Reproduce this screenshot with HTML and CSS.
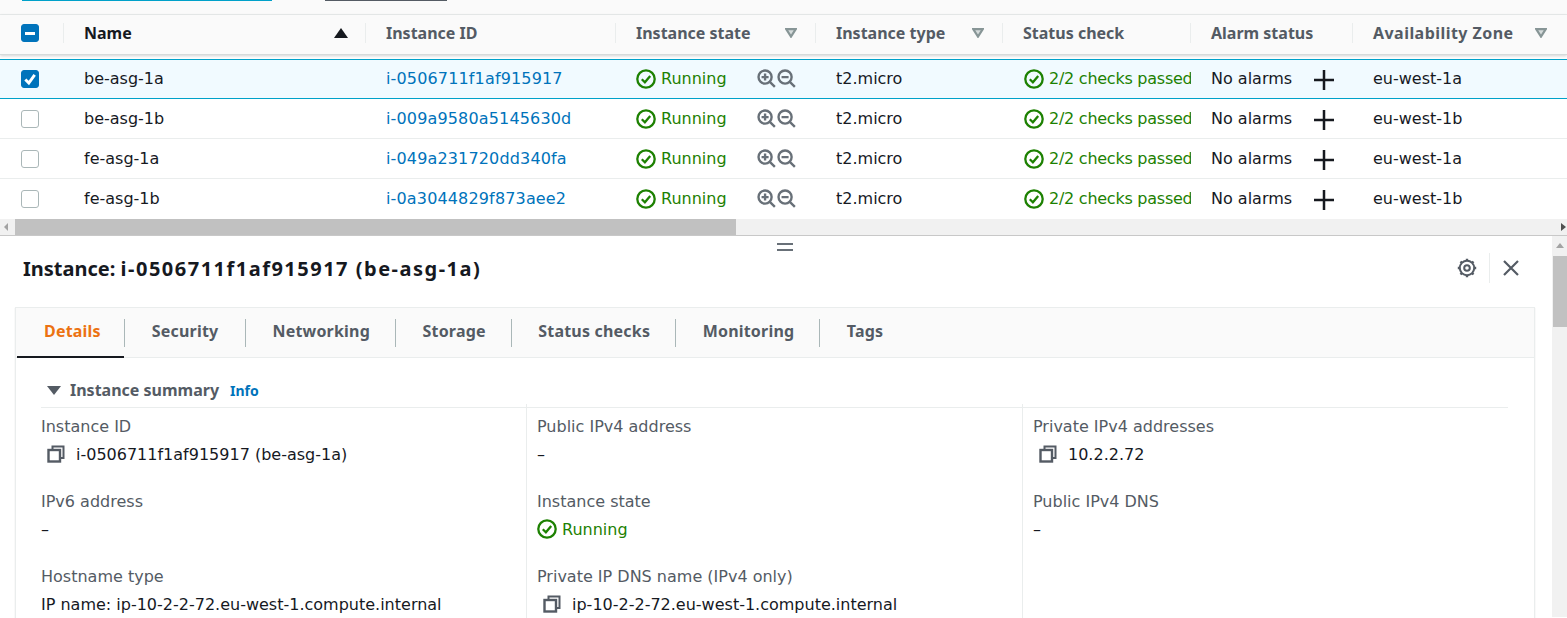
FILE: index.html

```html
<!DOCTYPE html>
<html lang="en">
<head>
  <meta charset="UTF-8">
  <title>Instances</title>
  <link rel="stylesheet" href="styles.css">
</head>
<body>
  <svg class="sprite" width="0" height="0">
    <symbol id="i-ok" viewBox="0 0 20 20">
      <circle cx="10" cy="10" r="8.7" fill="none" stroke="currentColor" stroke-width="2.300"/>
      <path d="M5.800 10.200l3.100 3.100 5.300-6.300" fill="none" stroke="currentColor" stroke-width="2.300"/>
    </symbol>
    <symbol id="i-zoom-in" viewBox="0 0 20 20">
      <circle cx="8.500" cy="8.500" r="6.900" fill="none" stroke="currentColor" stroke-width="2.500"/>
      <path d="M13.500 13.500l5.300 5.300M4.800 8.500h7.400M8.500 4.800v7.400" fill="none" stroke="currentColor" stroke-width="2.500"/>
    </symbol>
    <symbol id="i-zoom-out" viewBox="0 0 20 20">
      <circle cx="8.500" cy="8.500" r="6.900" fill="none" stroke="currentColor" stroke-width="2.500"/>
      <path d="M13.500 13.500l5.300 5.300M4.800 8.500h7.400" fill="none" stroke="currentColor" stroke-width="2.500"/>
    </symbol>
    <symbol id="i-plus" viewBox="0 0 20 20">
      <path d="M10 0v20M0 10h20" fill="none" stroke="currentColor" stroke-width="2.500"/>
    </symbol>
    <symbol id="i-filter" viewBox="0 0 12 10">
      <path d="M1.200 1.200h9.600L6 8.600z" fill="#d5dbdb" stroke="#879596" stroke-width="2.200"/>
    </symbol>
    <symbol id="i-copy" viewBox="0 0 18 18">
      <path d="M5.500 5V1.500h11V13H13" fill="none" stroke="currentColor" stroke-width="2"/>
      <rect x="1.500" y="5" width="11.500" height="11.500" fill="none" stroke="currentColor" stroke-width="2.400"/>
    </symbol>
  </svg>

  <div class="top-tabs">
    <span class="top-line teal"></span>
    <span class="top-line dark"></span>
  </div>

  <div class="grid-row head">
    <div class="cell check"><span class="box on"><span class="dash"></span></span></div>
    <div class="cell h-name"><span>Name</span><span class="sort"></span></div>
    <div class="cell">Instance ID</div>
    <div class="cell has-filter"><span>Instance state</span><svg class="filter"><use href="#i-filter"/></svg></div>
    <div class="cell has-filter"><span>Instance type</span><svg class="filter"><use href="#i-filter"/></svg></div>
    <div class="cell">Status check</div>
    <div class="cell">Alarm status</div>
    <div class="cell has-filter az-cell"><span class="az">Availability Zone</span><svg class="filter"><use href="#i-filter"/></svg></div>
  </div>

  <div class="grid-row selected">
    <div class="cell check"><span class="box on"><svg class="tick" viewBox="0 0 12 12"><path d="M2 6.500l3 3 5-7"/></svg></span></div>
    <div class="cell">be-asg-1a</div>
    <div class="cell"><a class="link">i-0506711f1af915917</a></div>
    <div class="cell state"><svg class="ok"><use href="#i-ok"/></svg><span class="green">Running</span><span class="zooms"><svg><use href="#i-zoom-in"/></svg><svg><use href="#i-zoom-out"/></svg></span></div>
    <div class="cell">t2.micro</div>
    <div class="cell clip"><svg class="ok"><use href="#i-ok"/></svg><span class="green">2/2 checks passed</span></div>
    <div class="cell alarm"><span>No alarms</span><svg class="plus"><use href="#i-plus"/></svg></div>
    <div class="cell">eu-west-1a</div>
  </div>
  <div class="grid-row">
    <div class="cell check"><span class="box"></span></div>
    <div class="cell">be-asg-1b</div>
    <div class="cell"><a class="link">i-009a9580a5145630d</a></div>
    <div class="cell state"><svg class="ok"><use href="#i-ok"/></svg><span class="green">Running</span><span class="zooms"><svg><use href="#i-zoom-in"/></svg><svg><use href="#i-zoom-out"/></svg></span></div>
    <div class="cell">t2.micro</div>
    <div class="cell clip"><svg class="ok"><use href="#i-ok"/></svg><span class="green">2/2 checks passed</span></div>
    <div class="cell alarm"><span>No alarms</span><svg class="plus"><use href="#i-plus"/></svg></div>
    <div class="cell">eu-west-1b</div>
  </div>
  <div class="grid-row">
    <div class="cell check"><span class="box"></span></div>
    <div class="cell">fe-asg-1a</div>
    <div class="cell"><a class="link">i-049a231720dd340fa</a></div>
    <div class="cell state"><svg class="ok"><use href="#i-ok"/></svg><span class="green">Running</span><span class="zooms"><svg><use href="#i-zoom-in"/></svg><svg><use href="#i-zoom-out"/></svg></span></div>
    <div class="cell">t2.micro</div>
    <div class="cell clip"><svg class="ok"><use href="#i-ok"/></svg><span class="green">2/2 checks passed</span></div>
    <div class="cell alarm"><span>No alarms</span><svg class="plus"><use href="#i-plus"/></svg></div>
    <div class="cell">eu-west-1a</div>
  </div>
  <div class="grid-row last">
    <div class="cell check"><span class="box"></span></div>
    <div class="cell">fe-asg-1b</div>
    <div class="cell"><a class="link">i-0a3044829f873aee2</a></div>
    <div class="cell state"><svg class="ok"><use href="#i-ok"/></svg><span class="green">Running</span><span class="zooms"><svg><use href="#i-zoom-in"/></svg><svg><use href="#i-zoom-out"/></svg></span></div>
    <div class="cell">t2.micro</div>
    <div class="cell clip"><svg class="ok"><use href="#i-ok"/></svg><span class="green">2/2 checks passed</span></div>
    <div class="cell alarm"><span>No alarms</span><svg class="plus"><use href="#i-plus"/></svg></div>
    <div class="cell">eu-west-1b</div>
  </div>

  <div class="hscroll">
    <span class="arrow left"></span>
    <span class="thumb"></span>
    <span class="arrow right"></span>
  </div>

  <div class="lower">
    <div class="pane">
      <div class="grip"></div>
      <div class="pane-head">
        <h2>Instance: <span class="head-id">i-0506711f1af915917 (be-asg-1a)</span></h2>
        <svg class="gear" viewBox="0 0 20 20">
          <circle cx="10" cy="10" r="2.800" fill="none" stroke="currentColor" stroke-width="2"/>
          <circle cx="10" cy="10" r="7.200" fill="none" stroke="currentColor" stroke-width="2"/>
          <path d="M10 .8v2M10 17.200v2M.8 10h2M17.200 10h2M3.500 3.500l1.400 1.400M15.100 15.100l1.400 1.400M3.500 16.500l1.400-1.400M15.100 4.900l1.400-1.400" fill="none" stroke="currentColor" stroke-width="2.400"/>
        </svg>
        <span class="head-sep"></span>
        <svg class="close" viewBox="0 0 18 18"><path d="M2 2l14 14M16 2L2 16" fill="none" stroke="currentColor" stroke-width="2.200"/></svg>
      </div>

      <div class="card">
        <div class="tabs">
          <span class="tab active">Details</span>
          <span class="tab">Security</span>
          <span class="tab">Networking</span>
          <span class="tab">Storage</span>
          <span class="tab">Status checks</span>
          <span class="tab">Monitoring</span>
          <span class="tab last-tab">Tags</span>
        </div>
        <div class="summary">
          <div class="summary-head">
            <span class="caret"></span>
            <span class="summary-title">Instance summary</span>
            <a class="info">Info</a>
          </div>
          <div class="fields">
            <div class="col">
              <div class="field"><div class="label">Instance ID</div><div class="value copy"><svg class="copy-icon"><use href="#i-copy"/></svg>i-0506711f1af915917 (be-asg-1a)</div></div>
              <div class="field"><div class="label">IPv6 address</div><div class="value">–</div></div>
              <div class="field"><div class="label">Hostname type</div><div class="value">IP name: ip-10-2-2-72.eu-west-1.compute.internal</div></div>
            </div>
            <div class="col">
              <div class="field"><div class="label">Public IPv4 address</div><div class="value">–</div></div>
              <div class="field"><div class="label">Instance state</div><div class="value green"><svg class="ok"><use href="#i-ok"/></svg>Running</div></div>
              <div class="field"><div class="label">Private IP DNS name (IPv4 only)</div><div class="value copy"><svg class="copy-icon"><use href="#i-copy"/></svg>ip-10-2-2-72.eu-west-1.compute.internal</div></div>
            </div>
            <div class="col">
              <div class="field"><div class="label">Private IPv4 addresses</div><div class="value copy"><svg class="copy-icon"><use href="#i-copy"/></svg>10.2.2.72</div></div>
              <div class="field"><div class="label">Public IPv4 DNS</div><div class="value">–</div></div>
            </div>
          </div>
        </div>
      </div>
    </div>
    <div class="vscroll">
      <span class="arrow up"></span>
      <span class="vthumb"></span>
    </div>
  </div>
</body>
</html>
```

FILE: styles.css

```css
body {
  margin: 0;
  height: 618px;
  overflow: hidden;
  background-color: #fff;
  color: #16191f;
  font-family: "DejaVu Sans", Arial, sans-serif;
  font-size: 16px;
}
.sprite {
  display: none;
}

/* strip above the table */
.top-tabs {
  display: flex;
  height: 14px;
  background-color: #fafafa;
  border-bottom: 1px solid #eaeded;
}
.top-line {
  display: block;
  height: 1px;
}
.teal {
  width: 250px;
  margin-left: 22px;
  background-color: #00a1c9;
}
.dark {
  width: 122px;
  margin-left: 53px;
  background-color: #545b64;
}

/* table */
.grid-row {
  display: grid;
  grid-template-columns: 64px 302px 250px 200px 187px 188px 162px 214px;
  height: 40px;
  box-sizing: border-box;
  border-bottom: 1px solid #eaeded;
  align-items: center;
}
.cell {
  display: flex;
  align-items: center;
  min-width: 0;
  padding-left: 20px;
  white-space: nowrap;
}
.check {
  padding-left: 21px;
}
.head {
  height: 40px;
  margin-bottom: 4px;
  padding-bottom: 3px;
  background-color: #fafafa;
  border-bottom: 1px solid #d5dbdb;
  box-shadow: 0 1px 3px rgba(0, 0, 0, 0.18);
  color: #545b64;
  font-family: "Noto Sans", Arial, sans-serif;
  font-weight: 700;
}
.head .cell {
  height: 20px;
  border-right: 1px solid #eaeded;
}
.head .cell:last-child {
  border-right: none;
}
.h-name {
  color: #16191f;
  justify-content: space-between;
  padding-right: 17px;
}
.has-filter {
  justify-content: space-between;
  padding-right: 18px;
}
.head .az-cell {
  padding-right: 20px;
}
.az {
  letter-spacing: 0.45px;
}
.sort {
  width: 0;
  height: 0;
  border-left: 7px solid transparent;
  border-right: 7px solid transparent;
  border-bottom: 10px solid #16191f;
}
.filter {
  width: 12px;
  height: 10px;
}
.selected {
  padding-bottom: 1px;
  background-color: #f1faff;
  border-top: 1px solid #00a1c9;
  border-bottom: 1px solid #00a1c9;
}
.last {
  border-bottom: 1px solid transparent;
}
.box {
  display: flex;
  align-items: center;
  justify-content: center;
  width: 18px;
  height: 18px;
  box-sizing: border-box;
  background-color: #fff;
  border: 1px solid #aab7b8;
  border-radius: 3px;
}
.box.on {
  background-color: #0073bb;
  border-color: #0073bb;
}
.dash {
  width: 10px;
  height: 3px;
  background-color: #fff;
}
.tick {
  width: 14px;
  height: 14px;
  fill: none;
  stroke: #fff;
  stroke-width: 2.500;
}
.link {
  color: #0073bb;
  letter-spacing: 0.15px;
}
.green {
  color: #1d8102;
}
.ok {
  width: 20px;
  height: 20px;
  flex: none;
  margin-right: 5px;
  color: #1d8102;
}
.state .green {
  width: 96px;
}
.zooms {
  display: flex;
  gap: 1px;
  color: #687078;
}
.zooms svg {
  width: 19px;
  height: 19px;
}
.clip {
  overflow: hidden;
}
.clip .green {
  letter-spacing: -0.25px;
}
.clip .ok {
  margin-left: 1px;
}
.alarm span {
  width: 103px;
}
.plus {
  width: 20px;
  height: 20px;
  margin-top: 2px;
  flex: none;
}

/* horizontal scrollbar */
.hscroll {
  display: flex;
  align-items: center;
  height: 17px;
  box-sizing: border-box;
  background-color: #f1f1f1;
  border-bottom: 1px solid #c8c8c8;
}
.thumb {
  width: 721px;
  height: 16px;
  margin-left: 7px;
  background-color: #c1c1c1;
}
.arrow {
  width: 0;
  height: 0;
  display: block;
}
.arrow.left {
  margin-left: 4px;
  border-top: 4px solid transparent;
  border-bottom: 4px solid transparent;
  border-right: 4px solid #a3a3a3;
}
.arrow.right {
  margin-left: auto;
  margin-right: 1px;
  border-top: 4px solid transparent;
  border-bottom: 4px solid transparent;
  border-left: 5px solid #505050;
}
.arrow.up {
  margin: 7px auto 0;
  border-left: 4px solid transparent;
  border-right: 4px solid transparent;
  border-bottom: 5px solid #a3a3a3;
}

/* details pane */
.lower {
  display: flex;
  height: 382px;
  overflow: hidden;
}
.pane {
  flex: 1;
  min-width: 0;
  padding-left: 15px;
  padding-right: 17px;
}
.grip {
  width: 16px;
  height: 8px;
  margin: 7px auto 0 762px;
  box-sizing: border-box;
  border-top: 2px solid #687078;
  border-bottom: 2px solid #687078;
}
.pane-head {
  display: flex;
  align-items: center;
  height: 34px;
  padding-left: 8px;
  padding-right: 15px;
}
.pane-head h2 {
  flex: 1;
  margin: 0;
  font-family: "Noto Sans", Arial, sans-serif;
  font-size: 20px;
  font-weight: 700;
}
.head-id {
  letter-spacing: 1.5px;
}
.gear {
  width: 20px;
  height: 20px;
  color: #545b64;
}
.head-sep {
  width: 1px;
  height: 30px;
  margin: 0 12px;
  background-color: #eaeded;
}
.close {
  width: 18px;
  height: 18px;
  color: #545b64;
}
.card {
  margin-top: 22px;
  border: 1px solid #eaeded;
  box-shadow: 0 1px 1px rgba(0, 0, 0, 0.15);
}
.tabs {
  display: flex;
  align-items: center;
  height: 50px;
  box-sizing: border-box;
  padding-left: 1px;
  background-color: #fafafa;
  border-bottom: 1px solid #eaeded;
  color: #545b64;
  font-family: "Noto Sans", Arial, sans-serif;
  font-weight: 700;
  letter-spacing: 0.2px;
}
.tab {
  display: flex;
  align-items: center;
  height: 28px;
  padding: 0 25px 3px 26.5px;
  box-sizing: border-box;
  border-right: 1px solid #aab7b8;
}
.tab.active + .tab {
  padding-left: 27px;
  padding-right: 26.5px;
}
.tab.active {
  padding-left: 27px;
  padding-right: 23px;
  color: #ec7211;
  position: relative;
}
.tab.active::after {
  content: "";
  position: absolute;
  left: 0;
  right: 0;
  bottom: -11px;
  height: 2px;
  background-color: #16191f;
}
.last-tab {
  border-right: none;
}
.summary {
  padding: 0 26px 0 25px;
}
.summary-head {
  display: flex;
  align-items: center;
  height: 50px;
  box-sizing: border-box;
  padding: 15px 0 0 6px;
  border-bottom: 1px solid #eaeded;
  font-family: "Noto Sans", Arial, sans-serif;
}
.caret {
  width: 0;
  height: 0;
  margin-right: 9px;
  border-left: 7px solid transparent;
  border-right: 7px solid transparent;
  border-top: 9px solid #545b64;
}
.summary-title {
  color: #545b64;
  font-weight: 700;
}
.info {
  margin-left: 11px;
  color: #0073bb;
  font-size: 14px;
  font-weight: 700;
}
.fields {
  display: grid;
  grid-template-columns: 486px 496px 1fr;
  margin-top: -4px;
}
.col {
  border-right: 1px solid #eaeded;
  padding-top: 8px;
  height: 240px;
}
.col + .col {
  padding-left: 10px;
}
.col:last-child {
  border-right: none;
}
.field {
  height: 75px;
}
.label {
  height: 28px;
  line-height: 30px;
  color: #545b64;
}
.value {
  display: flex;
  align-items: center;
  height: 28px;
  white-space: nowrap;
}
.copy {
  padding-left: 6px;
}
.copy-icon {
  width: 18px;
  height: 18px;
  margin-right: 11px;
  color: #545b64;
}
.vscroll {
  display: flex;
  flex-direction: column;
  width: 15px;
  height: 381px;
  flex: none;
  background-color: #f1f1f1;
}
.vthumb {
  width: 14px;
  height: 71px;
  margin: 8px auto 0;
  background-color: #c1c1c1;
}
```
